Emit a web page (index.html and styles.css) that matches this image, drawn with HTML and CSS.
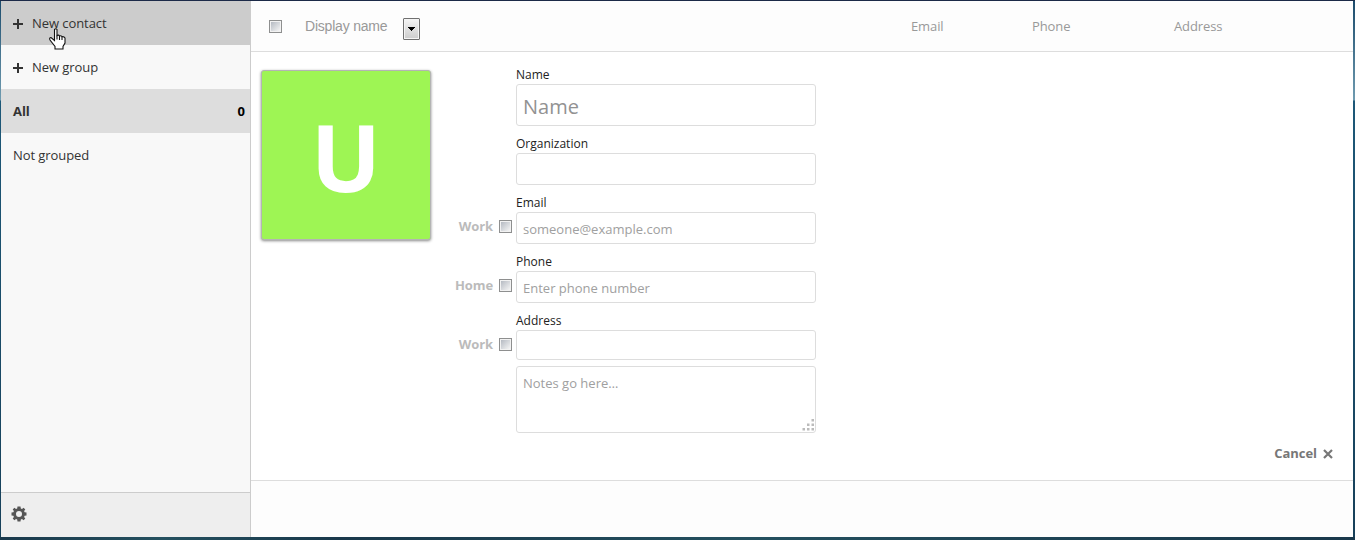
FILE: index.html
```html
<!DOCTYPE html>
<html lang="en">
<head>
<meta charset="utf-8">
<title>Contacts</title>
<link rel="stylesheet" href="styles.css">
</head>
<body>
<div class="window">
  <nav class="sidebar">
    <div class="nav-item hovered"><svg class="plus" viewBox="0 0 10 10"><path d="M4 0h2v4h4v2H6v4H4V6H0V4h4z"/></svg>New contact</div>
    <div class="nav-item"><svg class="plus" viewBox="0 0 10 10"><path d="M4 0h2v4h4v2H6v4H4V6H0V4h4z"/></svg>New group</div>
    <div class="nav-item active"><span>All</span><span class="count">0</span></div>
    <div class="nav-item">Not grouped</div>
    <div class="settings">
      <svg class="gear" viewBox="0 0 16 16"><path fill-rule="evenodd" d="M6.500.5h3l.3 1.900 1.200.5 1.600-1.200 1.700 1.700-1.200 1.600.5 1.200 1.900.3v3l-1.900.3-.5 1.200 1.200 1.600-1.700 1.700-1.600-1.200-1.200.5-.3 1.900h-3l-.3-1.900-1.200-.5-1.600 1.200-1.700-1.700 1.200-1.600-.5-1.200L.5 9.500v-3l1.900-.3.5-1.200-1.200-1.600 1.700-1.700L5 2.900l1.200-.5zM8 5a3 3 0 1 0 0 6 3 3 0 0 0 0-6z"/></svg>
    </div>
  </nav>
  <main class="content">
    <header class="header">
      <span class="check"></span>
      <span class="display-name">Display name</span>
      <span class="dropdown"><svg viewBox="0 0 7 4"><path d="M0 0h7v1H6v1H5v1H4v1H3V3H2V2H1V1H0z"/></svg></span>
      <span class="col col-email">Email</span>
      <span class="col col-phone">Phone</span>
      <span class="col">Address</span>
    </header>
    <section class="contact">
      <div class="avatar">U</div>
      <form class="form">
        <label class="label">Name</label>
        <div class="row"><input class="field name" placeholder="Name"></div>
        <label class="label">Organization</label>
        <div class="row"><input class="field"></div>
        <label class="label">Email</label>
        <div class="row"><span class="type">Work</span><span class="check"></span><input class="field" placeholder="someone@example.com"></div>
        <label class="label">Phone</label>
        <div class="row"><span class="type">Home</span><span class="check"></span><input class="field" placeholder="Enter phone number"></div>
        <label class="label">Address</label>
        <div class="row address-row"><span class="type">Work</span><span class="check"></span><input class="field address"></div>
        <div class="row notes-row"><textarea class="field notes" placeholder="Notes go here…"></textarea>
          <svg class="grip" viewBox="0 0 12 12"><path d="M9.500 0H12v2.500H9.500zM5 4.500h2.500V7H5zM9.500 4.500H12V7H9.500zM.5 9H3v2.500H.5zM5 9h2.500v2.500H5zM9.500 9H12v2.500H9.500z"/></svg></div>
      </form>
      <div class="cancel">Cancel<svg viewBox="0 0 10 10"><path d="M1 1l8 8M9 1L1 9"/></svg></div>
    </section>
  </main>
</div>
<svg class="cursor" viewBox="0 0 17 22"><path d="M5.500 1.500q1.500-1.500 2.500 0v6q1.500-1 2.500.5 1.500-.7 2.500.7 2-.5 3 1.300v5l-2 3.500v2.500H6V18.500L1 12q-1-2.500 1-2.500l3.500 3z"/><path d="M8 7.500v4M10.500 8v4M13 9v3"/></svg>
</body>
</html>
```
FILE: styles.css
```css
* { box-sizing: border-box; }
body {
  margin: 0;
  height: 540px;
  overflow: hidden;
  padding: 1px 2px 3px 1px;
  background:
    linear-gradient(#1c2a48, #1c2a48) 0 0 / 100% 1px no-repeat,
    linear-gradient(90deg, #19384b, #24505f 12%, #19384b 25%, #24505f 55%, #19384b) 0 100% / 100% 3px no-repeat,
    linear-gradient(#1b4b6c, #6f9bb0 100px, #1d5878 101px, #174059) 0 0 / 100% 100% no-repeat;
  font-family: "Open Sans", sans-serif;
  font-size: 13px;
  color: #333;
}
.window { display: flex; width: 1352px; height: 536px; background: #fff; }
.sidebar { display: flex; flex-direction: column; width: 250px; background: #f8f8f8; border-right: 1px solid #ccc; }
.nav-item { display: flex; align-items: center; height: 44px; padding: 0 5px 0 12px; letter-spacing: -.07px; }
.hovered { background: #ccc; }
.active { justify-content: space-between; background: #ddd; font-weight: 700; }
.count { color: #000; letter-spacing: 0; }
.plus { width: 10px; height: 10px; margin: 2px 9px 0 0; fill: #333; }
.settings { margin-top: auto; height: 45px; padding: 13px 10px; border-top: 1px solid #ccc; background: #eee; }
.gear { display: block; width: 16px; height: 16px; fill: #555; }
.content { width: 1102px; background: #fdfdfd; }
.header { display: flex; align-items: center; height: 51px; padding-left: 18px; border-bottom: 1px solid #ddd; color: #999; letter-spacing: -.1px; }
.check { flex: none; width: 13px; height: 13px; border: 1px solid #8e8f8f; background: linear-gradient(135deg, #b5bac2, #f5f5f5) content-box, #f2f2f2; padding: 1px; }
.display-name { width: 98px; margin-left: 23px; font-family: "Liberation Sans", sans-serif; font-size: 14px; letter-spacing: -.2px; }
.dropdown { display: flex; align-items: center; justify-content: center; width: 17px; height: 22px; margin-top: 5px; border: 1px solid #707070; border-radius: 1px; background: linear-gradient(#f5f5f5, #ccc); box-shadow: inset 0 0 0 1px #f4f4f4; }
.dropdown svg { width: 7px; height: 4px; fill: #000; }
.col-email { width: 121px; margin-left: 491px; }
.col-phone { width: 142px; }
.contact { display: flex; height: 429px; padding: 18px 0 0 10px; border-bottom: 1px solid #ddd; background: #fff; }
.avatar { width: 170px; height: 170px; border: 1px solid #b4b4b4; border-radius: 3px; background: #9ef554; box-shadow: 0 1px 3px #888; color: #fff; font-size: 93px; font-weight: 700; line-height: 170px; text-align: center; }
.form { width: 385px; margin-top: -6px; }
.label { display: block; height: 20px; padding-left: 85px; color: #222; font-size: 12px; line-height: 21px; }
.row { display: flex; justify-content: flex-end; align-items: center; margin-bottom: 7px; }
.type { margin: -4px 6px 0 0; color: #bbb; font-weight: 700; letter-spacing: -.1px; }
.row .check { margin: -4px 4px 0 0; }
.address-row .type, .address-row .check { margin-top: -2px; }
.field { width: 300px; height: 32px; padding: 2px 6px 0; border: 1px solid #ddd; border-radius: 3px; background: #fff; font: 13px "Open Sans", sans-serif; outline: 0; }
.field::placeholder { color: #a0a0a0; opacity: 1; }
.name { height: 42px; font-size: 20px; }
.name::placeholder { color: #929292; }
.address { height: 30px; }
.notes { display: block; height: 67px; padding: 7px 6px; resize: none; }
.notes-row { position: relative; margin-top: -1px; }
.grip { position: absolute; right: 2px; bottom: 2px; width: 12px; height: 12px; fill: #bbb; }
.cancel { display: flex; align-items: center; gap: 6px; align-self: flex-end; margin: 0 20px 18px auto; color: #777; font-weight: 700; letter-spacing: -.05px; }
.cancel svg { width: 10px; height: 10px; margin-top: 2px; stroke: #777; stroke-width: 2.200; fill: none; }
.cursor { position: absolute; left: 49px; top: 28px; width: 17px; height: 22px; fill: #fff; stroke: #111; stroke-width: 1.100; }
```
